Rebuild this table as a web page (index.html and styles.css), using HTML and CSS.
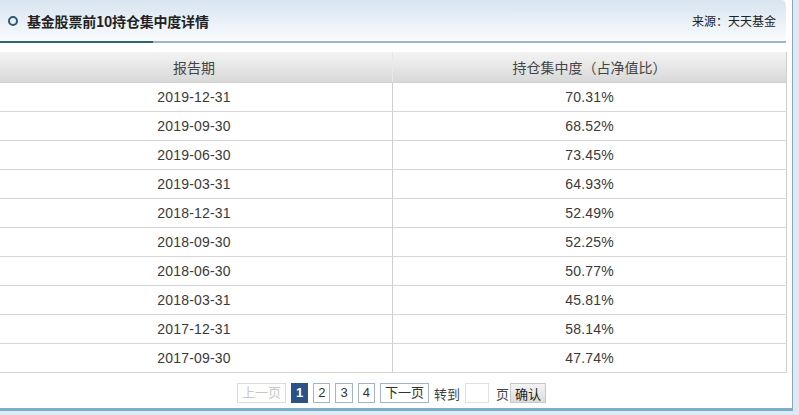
FILE: index.html
```html
<!DOCTYPE html>
<html lang="zh-CN">
<head>
<meta charset="utf-8">
<title>基金股票前10持仓集中度详情</title>
<link rel="stylesheet" href="styles.css">
</head>
<body>
<div class="panel">
  <div class="box-head">
    <div class="head-title">
      <span class="ring"></span>
      <span class="title-text">基金股票前10持仓集中度详情</span>
    </div>
    <div class="source">来源：天天基金</div>
  </div>
  <table class="data">
    <thead>
      <tr><th class="c1">报告期</th><th class="c2">持仓集中度（占净值比）</th></tr>
    </thead>
    <tbody>
      <tr><td>2019-12-31</td><td>70.31%</td></tr>
      <tr><td>2019-09-30</td><td>68.52%</td></tr>
      <tr><td>2019-06-30</td><td>73.45%</td></tr>
      <tr><td>2019-03-31</td><td>64.93%</td></tr>
      <tr><td>2018-12-31</td><td>52.49%</td></tr>
      <tr><td>2018-09-30</td><td>52.25%</td></tr>
      <tr><td>2018-06-30</td><td>50.77%</td></tr>
      <tr><td>2018-03-31</td><td>45.81%</td></tr>
      <tr><td>2017-12-31</td><td>58.14%</td></tr>
      <tr><td>2017-09-30</td><td>47.74%</td></tr>
    </tbody>
  </table>
  <div class="pager">
    <span class="pg disabled">上一页</span>
    <span class="pg num active">1</span>
    <span class="pg num">2</span>
    <span class="pg num">3</span>
    <span class="pg num">4</span>
    <span class="pg">下一页</span>
    <span class="pg-label">转到</span>
    <input class="pg-input" type="text">
    <span class="pg-label pg-unit">页</span>
    <button class="pg-btn" type="button">确认</button>
  </div>
</div>
</body>
</html>
```

FILE: styles.css
```css
html, body {
  margin: 0;
  padding: 0;
}
body {
  background: #dde9f5;
  font-family: Arial, "Liberation Sans", "Noto Sans CJK SC", sans-serif;
  color: #333;
  overflow: hidden;
}
.panel {
  width: 792px;
  height: 408px;
  background: #fff;
  border-right: 1px solid #8ea7bd;
  border-bottom: 3px solid #7cb0c6;
  position: relative;
  overflow: hidden;
}
.box-head {
  width: 786px;
  height: 41px;
  box-sizing: border-box;
  display: flex;
  align-items: center;
  justify-content: space-between;
  background: linear-gradient(to bottom, #d8e4f0 0%, #eaf1f8 55%, #fafcfe 100%);
  border-top-right-radius: 5px;
  position: relative;
  padding: 0 10px 0 8px;
}
.box-head::after {
  content: "";
  position: absolute;
  left: 0;
  right: 0;
  bottom: -2px;
  height: 2px;
  background: linear-gradient(to right, #2c6570 0, #2c6570 153px, #9fb5c3 153px, #9fb5c3 100%);
}
.head-title {
  display: flex;
  align-items: center;
}
.ring {
  width: 6px;
  height: 6px;
  border: 2px solid #2d5a78;
  border-radius: 50%;
  margin-right: 9px;
  margin-top: 1px;
}
.title-text {
  font-size: 14px;
  font-weight: bold;
  color: #222;
  font-family: "Noto Sans CJK SC", sans-serif;
  letter-spacing: -0.2px;
}
.source {
  font-size: 12px;
  color: #222;
  font-family: "Noto Sans CJK SC", sans-serif;
}
.data {
  margin: 11px 0 0 -4px;
  width: 791px;
  border-collapse: collapse;
  table-layout: fixed;
  font-size: 14px;
}
.data th {
  height: 30px;
  padding: 0;
  font-weight: normal;
  color: #444;
  font-family: "Noto Sans CJK SC", sans-serif;
  background: linear-gradient(to bottom, #f3f3f3 0%, #e6e6e6 50%, #d8d8d8 100%);
  border-right: 1px solid #d0d0d0;
  border-bottom: 1px solid #cfcfcf;
}
.data th.c1 {
  width: 396px;
  border-right: 1px solid #e8e8e8;
}
.data td {
  height: 27px;
  padding: 1px 0 0;
  line-height: 27px;
  text-align: center;
  color: #3a3a3a;
  letter-spacing: 0.2px;
  border-right: 1px solid #cfcfcf;
  border-bottom: 1px solid #d6d6d6;
}
.pager {
  margin: 10px 0 0 -4px;
  width: 791px;
  display: flex;
  justify-content: center;
  align-items: center;
  gap: 5px;
  font-size: 13px;
  font-family: "Noto Sans CJK SC", sans-serif;
}
.pg {
  height: 18px;
  line-height: 18px;
  padding: 0 4px;
  border: 1px solid #a4b4c4;
  color: #333;
  text-align: center;
  font-family: Arial, "Liberation Sans", "Noto Sans CJK SC", sans-serif;
}
.pg.num {
  min-width: 7px;
}
.pg.disabled {
  color: #c8c8c8;
  border-color: #dcdcdc;
}
.pg.active {
  background: #2b5186;
  border-color: #2b5186;
  color: #fff;
  font-weight: bold;
}
.pg-label {
  color: #444;
}
.pg-unit {
  margin-left: 2px;
}
.pg-input {
  width: 22px;
  height: 18px;
  border: 1px solid #e0e0e0;
  padding: 0;
  margin: 0;
}
.pg-btn {
  height: 20px;
  padding: 0 4px;
  margin: 0 0 0 -4px;
  border: 1px solid #c8c8c8;
  background: linear-gradient(to bottom, #f4f4f4, #dcdcdc);
  font-size: 13px;
  color: #222;
  font-family: "Noto Sans CJK SC", sans-serif;
}
```
